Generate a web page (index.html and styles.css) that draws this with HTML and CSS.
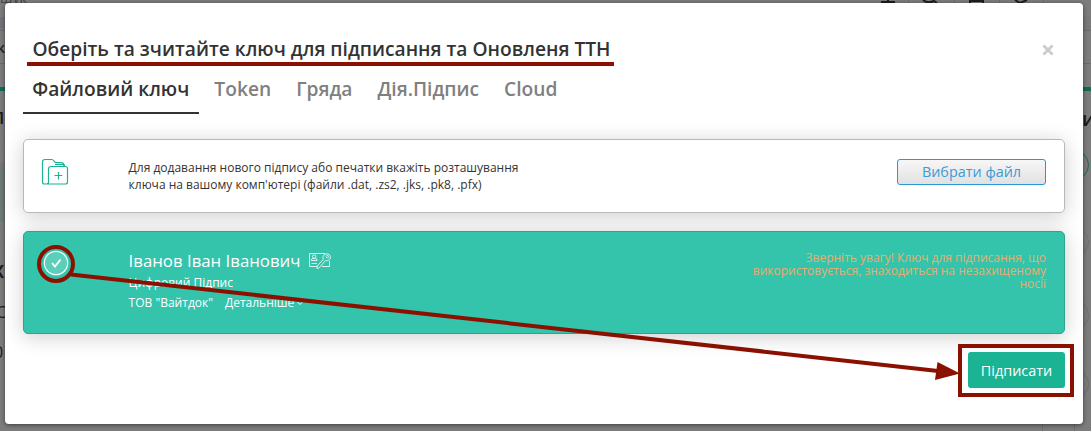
FILE: index.html
```html
<!DOCTYPE html>
<html lang="uk">
<head>
<meta charset="utf-8">
<title>Підписання ТТН</title>
<link rel="stylesheet" href="styles.css">
</head>
<body>
<div class="page" aria-hidden="true">
  <svg class="page-lines" width="1091" height="431" viewBox="0 0 1091 431" fill="none">
    <rect y="17" width="1091" height="14" fill="#787878"/>
    <rect y="17" width="5" height="11" fill="#70747a"/>
    <rect y="163" width="5" height="58" fill="#6f7a79"/>
    <path d="M0 30.5H1091M0 63.5H1091M908.5 0V3M954.5 0V3M999.5 0V3M1043.5 0V3M1042.5 424V431M1074.5 424V431" stroke="#6c6c6c"/>
    <path d="M0 89H1091" stroke="#0f6b58" stroke-width="4"/>
    <path d="M881 2H895M888 0V3M923 0Q928 4 934 1L937 3M970 0V3M983 0V3M970 1H983M1015 0L1020 3L1027 0" stroke="#1c1c1c" stroke-width="2"/>
    <circle cx="1074" cy="165" r="14.5" stroke="#176955"/>
    <circle cx="1074" cy="242" r="14.5" stroke="#707070"/>
    <circle cx="1074" cy="315" r="14.5" stroke="#707070"/>
    <circle cx="1074" cy="384" r="14.5" stroke="#6d6d6d"/>
  </svg>
  <span class="bg-text bg-search">шук</span>
  <span class="bg-text bg-a">к</span>
  <span class="bg-text bg-b">Л</span>
  <span class="bg-text bg-c">Ж</span>
  <span class="bg-text bg-d">С</span>
  <span class="bg-text bg-e">0</span>
  <span class="bg-text bg-f">и</span>
</div>

<main class="modal">
  <header class="modal-head">
    <h1 class="title">Оберіть та зчитайте ключ для підписання та Оновленя ТТН</h1>
    <button class="close" aria-label="Закрити"><svg width="12" height="12" viewBox="0 0 12 12"><path d="M1.500 1.500L10.500 10.500M10.500 1.500L1.500 10.500" stroke="#ccc" stroke-width="2.900"/></svg></button>
  </header>
  <nav class="tabs">
    <a class="tab tab-active">Файловий ключ</a>
    <a class="tab">Token</a>
    <a class="tab">Гряда</a>
    <a class="tab">Дія.Підпис</a>
    <a class="tab">Cloud</a>
  </nav>
  <section class="card file-card">
    <svg class="folder" width="28" height="28" viewBox="0 0 28 28" fill="none" stroke="#1ab394" stroke-width="1.2">
      <path d="M7 26H3.5Q1.5 26 1.5 24V4Q1.5 1.5 4 1.5H10.5Q12 1.5 13 3L14.5 4.700H20Q23 4.700 23.500 8M7.500 24V11Q7.500 8.500 10 8.500H24.500Q26.500 8.500 26.500 10.500V24Q26.500 26 24.500 26H5.500Q7.500 26 7.500 24M14 6.500H21.500Q22.500 6.500 23 8M17.500 14V21.500M13.500 17.500H21.300"/>
    </svg>
    <p class="hint">Для додавання нового підпису або печатки вкажіть розташування ключа на вашому комп'ютері (файли .dat, .zs2, .jks, .pk8, .pfx)</p>
    <button class="choose">Вибрати файл</button>
  </section>
  <section class="card key-card">
    <svg class="check" width="26" height="26" viewBox="0 0 26 26" fill="none" stroke="#fff">
      <circle cx="13" cy="13" r="11.700" fill="#fff" fill-opacity=".2" stroke-width="1.200"/>
      <path d="M9 13L12 16.500L17.500 9.500" stroke-width="1.900"/>
    </svg>
    <div class="owner">
      <div class="name">Іванов Іван Іванович
        <svg width="24" height="18" viewBox="0 0 24 18" fill="none" stroke="#d9f5ee" stroke-width="1">
          <path d="M9 14.500H1.500V1.500H17M21.500 9V14.500H14M3.500 8.500V8Q3.500 6.500 5 6.500H7.500Q9 6.500 9 8V8.500ZM3.500 11.500H9"/>
          <circle cx="6.200" cy="4.500" r="1.700"/>
          <path d="M15.200 7.500Q14 4.500 16.500 2.500Q19 .9 21.300 2.500Q23.200 4.500 22 7Q20 9.400 17.300 8.700L11.500 15.500L9 16.700L9.300 14Z"/>
          <circle cx="19.300" cy="4.700" r="1.200"/>
        </svg>
      </div>
      <div class="kind">Цифровий Підпис</div>
      <div class="company"><span>ТОВ "Вайтдок"</span><span class="more">Детальніше <svg width="6" height="5" viewBox="0 0 6 5" fill="none" stroke="#fff"><path d="M.5 1L3 3.500L5.500 1"/></svg></span></div>
    </div>
    <p class="warning">Зверніть увагу! Ключ для підписання, що використовується, знаходиться на незахищеному носії</p>
  </section>
  <footer class="actions"><button class="sign">Підписати</button></footer>
</main>

<svg class="annotations" width="1091" height="431" viewBox="0 0 1091 431" fill="none" stroke="#8a1100" stroke-width="4">
  <path d="M27 64H614"/>
  <circle cx="56" cy="264" r="17"/>
  <path d="M71 274.500L938 371"/>
  <path d="M937.500 362L960 373.500L935 380Z" fill="#8a1100" stroke="none"/>
  <rect x="960" y="346" width="112" height="49"/>
</svg>
</body>
</html>
```
FILE: styles.css
```css
* { box-sizing: border-box; }

body {
  margin: 0;
  width: 1091px;
  height: 431px;
  overflow: hidden;
  position: relative;
  background: #7c7c7c;
  color: #333;
  font-family: "Open Sans", "Noto Sans", sans-serif;
}

button {
  font-family: inherit;
  border: 0;
  padding: 0;
}

.page {
  position: absolute;
  inset: 0;
}

.page-lines { display: block; }

.bg-text {
  position: absolute;
  color: #1b1c20;
  font-size: 14px;
  line-height: 20px;
}

.bg-search { left: 0; top: -12px; color: #454545; }
.bg-a { left: -3px; top: 38px; font-weight: 600; }
.bg-b { left: -8px; top: 108px; font-size: 17px; font-weight: 600; }
.bg-c { left: -12px; top: 262px; font-size: 17px; font-weight: 700; }
.bg-d { left: -4px; top: 302px; font-size: 16px; }
.bg-e { left: -6px; top: 342px; font-size: 16px; }
.bg-f { left: 1082px; top: 109px; font-size: 20px; font-weight: 600; }

.modal {
  position: relative;
  display: flex;
  flex-direction: column;
  width: 1078px;
  height: 421px;
  margin: 3px 0 0 5px;
  padding: 32px 18px 0;
  background: #fff;
  border-radius: 4px;
  box-shadow: 0 1px 4px rgba(0, 0, 0, .5);
}

.modal-head {
  display: flex;
  justify-content: space-between;
  align-items: center;
  height: 28px;
  padding: 0 11px 0 9.400px;
}

.title {
  margin: 0;
  font-size: 19.2px;
  line-height: 28px;
  font-weight: 600;
  white-space: nowrap;
}

.close {
  display: flex;
  background: none;
  margin-top: 2px;
}

.tabs {
  display: flex;
  height: 51px;
  gap: 6.400px;
}

.tab {
  height: 51px;
  padding: 12px 9.300px 0;
  font-size: 19.2px;
  line-height: 28px;
  font-weight: 600;
  color: #808080;
  white-space: nowrap;
}

.tab-active {
  color: #333;
  border-bottom: 2px solid #333;
}

.card {
  display: flex;
  align-items: flex-start;
  border-radius: 5px;
  box-shadow: 0 3px 20px rgba(0, 0, 0, .2);
}

.file-card {
  height: 74px;
  margin-top: 25px;
  padding: 18px 18px 18px 17px;
  background: #fff;
  border: 1px solid #b8b8b8;
}

.folder { flex: none; width: 28px; }

.hint {
  width: 420px;
  margin: 1px 0 0 59.600px;
  font-size: 12px;
  line-height: 17px;
}

.choose {
  width: 149px;
  height: 26px;
  margin: 1px 0 0 auto;
  color: #3a9bd6;
  font-size: 14.4px;
  line-height: 24px;
  background: linear-gradient(#f7f7f7, #e1e1e1);
  border: 1px solid #2a97da;
  border-radius: 3px;
}

.key-card {
  height: 103px;
  margin-top: 18px;
  padding: 18px;
  color: #fff;
  background: #34c3ab;
  border: 1px solid #2da58c;
}

.check { flex: none; margin: 0 0 0 1px; }

.owner { margin-left: 59.600px; }

.name {
  display: flex;
  align-items: center;
  gap: 8px;
  font-size: 16.8px;
  line-height: 22px;
}

.kind {
  margin-top: 1px;
  font-size: 12px;
  line-height: 20px;
}

.company {
  display: flex;
  gap: 12px;
  font-size: 12px;
  line-height: 20px;
}

.more {
  display: flex;
  align-items: center;
  gap: 3px;
}

.warning {
  width: 310px;
  margin: 1px 0 0 auto;
  color: #e5ae70;
  font-size: 12px;
  line-height: 13px;
  text-align: right;
}

.actions {
  display: flex;
  justify-content: flex-end;
  margin-top: 18px;
}

.sign {
  width: 97px;
  height: 36px;
  color: #fff;
  background: #1ab394;
  border-radius: 3px;
  font-size: 14.4px;
}

.annotations {
  position: absolute;
  left: 0;
  top: 0;
  pointer-events: none;
}
```
